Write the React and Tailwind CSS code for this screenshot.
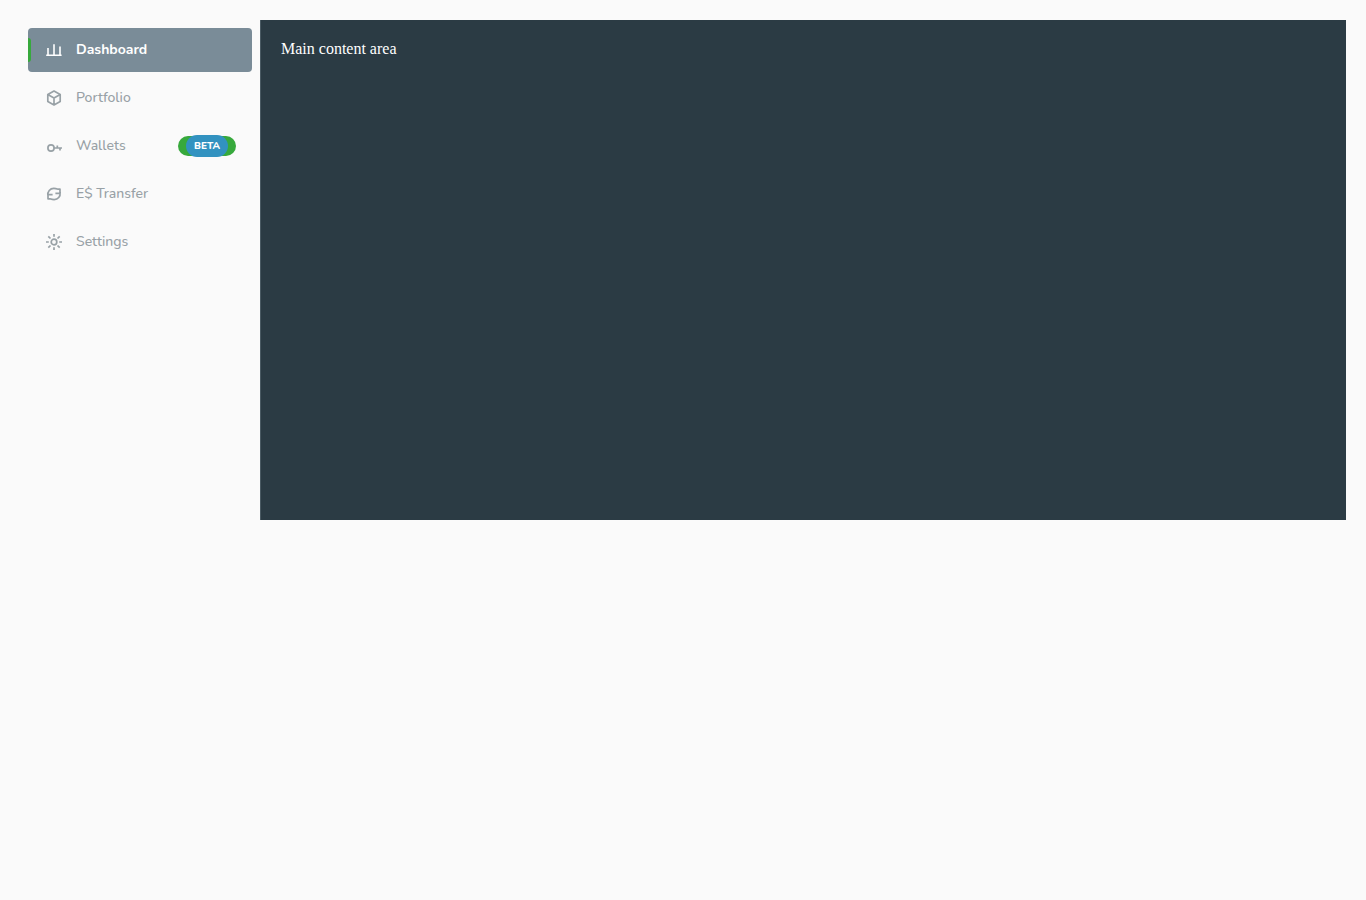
const stroke = {
  viewBox: "0 0 20 20",
  fill: "none",
  stroke: "currentColor",
  strokeWidth: 1.7,
  strokeLinejoin: "round",
  className: "size-5 shrink-0",
  "aria-hidden": true,
};

const ChartIcon = () => (
  <svg {...stroke}>
    <path d="M2.2 15.2H17.6M4 15V8M10 15V4.2M16 15V6.4" strokeWidth="1.6" />
  </svg>
);

const CubeIcon = () => (
  <svg {...stroke}>
    <path d="M10 3L16.2 6.4V13.6L10 17L3.8 13.6V6.4ZM3.8 6.4L10 9.9L16.2 6.4M10 9.9V17" />
  </svg>
);

const KeyIcon = () => (
  <svg {...stroke}>
    <circle cx="7" cy="12" r="3.1" />
    <path d="M10 12H18M13.3 12V9.6M16 12V14.4" />
  </svg>
);

const TransferIcon = () => (
  <svg {...stroke}>
    <path d="M3.9 11.2C3.4 7.6 6 4.4 9.8 4.4C11.6 4.4 12.9 4.8 14.2 5.2L16 5.2V9.4H11.4M16.1 8.8C16.6 12.4 14 15.6 10.2 15.6C8.4 15.6 7.1 15.2 5.8 14.8L4 14.8V10.6H8.6" />
  </svg>
);

const GearIcon = () => (
  <svg {...stroke}>
    <circle cx="10" cy="10" r="2.8" />
    <path d="M10 2V4.8M10 15.2V18M2 10H4.8M15.2 10H18M4.3 4.3L6.5 6.5M13.5 13.5L15.7 15.7M4.3 15.7L6.5 13.5M13.5 6.5L15.7 4.3" />
  </svg>
);

const items = [
  { label: "Dashboard", Icon: ChartIcon, active: true },
  { label: "Portfolio", Icon: CubeIcon },
  { label: "Wallets", Icon: KeyIcon, badge: "BETA" },
  { label: "E$ Transfer", Icon: TransferIcon },
  { label: "Settings", Icon: GearIcon },
];

function NavItem({ label, Icon, active, badge }) {
  return (
    <li>
      <a
        href="#"
        aria-current={active ? "page" : undefined}
        className={
          "relative flex h-11 items-center gap-3 rounded px-4 text-sm leading-[18px] " +
          (active ? "bg-[#7a8c98] font-bold text-white" : "font-medium text-[#98a1a6]")
        }
      >
        {active && <span className="absolute left-0 top-2.5 h-6 w-[3px] rounded-r-sm bg-[#37a93c]" />}
        <Icon />
        <span className="flex-1">{label}</span>
        {badge && (
          <span className="flex h-5 items-center rounded-full bg-[#37a93c] px-2 text-[10px] font-extrabold text-white">
            <span className="flex h-[22px] w-[42px] items-center justify-center rounded-full bg-[#3292c0]">
              {badge}
            </span>
          </span>
        )}
      </a>
    </li>
  );
}

export default function App() {
  return (
    <div className="min-h-screen bg-[#fafafa] p-5">
      <div className="flex min-h-[500px]">
        <nav aria-label="Main" className="w-60 shrink-0 p-2 font-['Nunito','Open_Sans',sans-serif]">
          <ul className="flex flex-col gap-1">
            {items.map((item) => (
              <NavItem key={item.label} {...item} />
            ))}
          </ul>
        </nav>
        <main className="flex-1 border-l border-[#4a5a63] bg-[#2b3b44] p-5 font-['Liberation_Serif',serif] text-base leading-[18px] text-white">
          Main content area
        </main>
      </div>
    </div>
  );
}
